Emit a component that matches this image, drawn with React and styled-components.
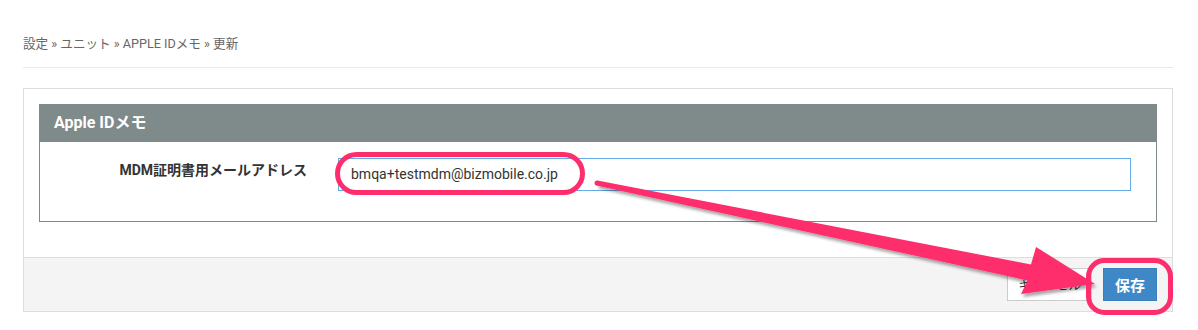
import React from "react"
import styled, { createGlobalStyle } from "styled-components"

const GlobalStyle = createGlobalStyle`
  html, body {
    margin: 0;
    padding: 0;
    background: #ffffff;
  }
  body {
    font-family: Roboto, "Noto Sans CJK JP", sans-serif;
    color: #333333;
  }
`

const Page = styled.div`
  position: relative;
  width: 1198px;
  height: 330px;
  box-sizing: border-box;
  padding: 35px 25px 0 23px;
  overflow: hidden;
`

const Breadcrumb = styled.div`
  font-size: 12.6px;
  line-height: 18px;
  color: #666666;
  padding-bottom: 14px;
  border-bottom: 1px solid #e9e9e9;
`

const Card = styled.div`
  margin-top: 20px;
  border: 1px solid #dddddd;
  background: #ffffff;
`

const CardBody = styled.div`
  padding: 15px 15px 35px;
`

const Panel = styled.div`
  border: 1px solid #7f8a8a;
`

const PanelHeader = styled.div`
  height: 38px;
  background: #7f8a8a;
  color: #ffffff;
  font-size: 16px;
  font-weight: 700;
  line-height: 38px;
  padding-left: 15px;
  margin: -1px -1px 0;
`

const PanelBody = styled.div`
  display: grid;
  grid-template-columns: 283px 1fr;
  column-gap: 15px;
  padding: 16px 25px 30px 0;
`

const Label = styled.label`
  text-align: right;
  padding-right: 16px;
  padding-top: 1px;
  font-size: 14px;
  font-weight: 700;
  color: #333333;
`

const Input = styled.div`
  height: 31px;
  border: 1px solid #62abe6;
  font-size: 14px;
  line-height: 31px;
  padding-left: 12px;
  color: #333333;
`

const Footer = styled.div`
  display: flex;
  justify-content: flex-end;
  gap: 11px;
  padding: 10px 15px;
  background: #f4f4f4;
  border-top: 1px solid #dddddd;
`

const Button = styled.button`
  height: 33px;
  padding: 0 ${(p) => (p.$primary ? "11px" : "10px")};
  font-family: Roboto, "Noto Sans CJK JP", sans-serif;
  font-size: ${(p) => (p.$primary ? "15px" : "12.5px")};
  font-weight: ${(p) => (p.$primary ? 700 : 400)};
  color: ${(p) => (p.$primary ? "#ffffff" : "#333333")};
  background: ${(p) => (p.$primary ? "#3f88c8" : "#ffffff")};
  border: 1px solid ${(p) => (p.$primary ? "#3a7fbd" : "#cccccc")};
  border-radius: 0;
`

const Overlay = styled.svg`
  position: absolute;
  left: 0;
  top: 0;
  pointer-events: none;
`

const PINK = "#fe2d6c"

const Annotations = () => (
  <Overlay width="1198" height="330" viewBox="0 0 1198 330">
    <defs>
      <filter id="shadow" x="-10%" y="-10%" width="120%" height="130%">
        <feDropShadow dx="2" dy="3" stdDeviation="1.5" floodColor="#000" floodOpacity="0.35" />
      </filter>
    </defs>
    <rect x="337.5" y="154.5" width="245" height="38" rx="19" fill="none" stroke={PINK} strokeWidth="5" />
    <polygon
      points="597.5,180.6 1031,264.5 1036,247 1095,284 1021,294 1027.5,280.5 596.5,185.4"
      fill={PINK}
      strokeLinejoin="round"
      filter="url(#shadow)"
    />
    <circle cx="597" cy="183" r="2.5" fill={PINK} />
    <rect x="1088.5" y="260.5" width="82" height="52" rx="16" fill="none" stroke={PINK} strokeWidth="5" />
  </Overlay>
)

export default function App() {
  return (
    <>
      <GlobalStyle />
      <Page>
        <Breadcrumb>設定 » ユニット » APPLE IDメモ » 更新</Breadcrumb>
        <Card>
          <CardBody>
            <Panel>
              <PanelHeader>Apple IDメモ</PanelHeader>
              <PanelBody>
                <Label>MDM証明書用メールアドレス</Label>
                <Input>bmqa+testmdm@bizmobile.co.jp</Input>
              </PanelBody>
            </Panel>
          </CardBody>
          <Footer>
            <Button>キャンセル</Button>
            <Button $primary>保存</Button>
          </Footer>
        </Card>
        <Annotations />
      </Page>
    </>
  )
}
